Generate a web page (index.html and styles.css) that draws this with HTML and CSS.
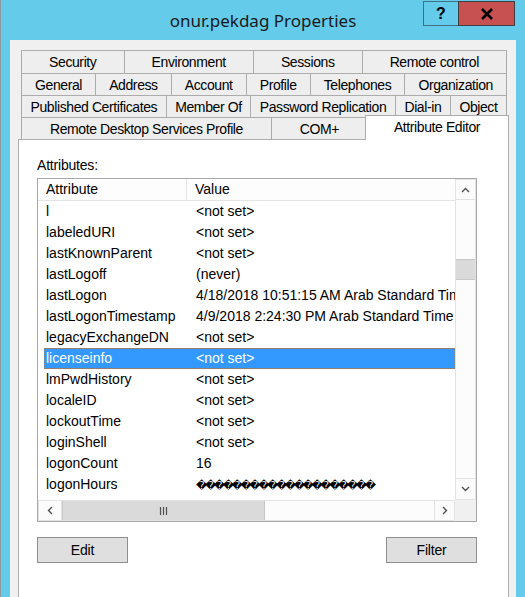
FILE: index.html
```html
<!DOCTYPE html>
<html>
<head>
<meta charset="utf-8">
<title>onur.pekdag Properties</title>
<link rel="stylesheet" href="styles.css">
</head>
<body>
<div class="window">
  <div class="titlebar">
    <div class="spacer"></div>
    <div class="title">onur.pekdag Properties</div>
    <div class="caption-buttons">
      <div class="cap-btn help">?</div>
      <div class="cap-btn close">
        <svg width="14" height="12" viewBox="0 0 14 12"><path d="M2 1 L12 11 M12 1 L2 11" stroke="#000" stroke-width="2.6" fill="none"/></svg>
      </div>
    </div>
  </div>
  <div class="client">
    <div class="tabs">
      <div class="tab-row first-row">
        <div class="tab">Security</div>
        <div class="tab">Environment</div>
        <div class="tab">Sessions</div>
        <div class="tab">Remote control</div>
      </div>
      <div class="tab-row">
        <div class="tab">General</div>
        <div class="tab">Address</div>
        <div class="tab">Account</div>
        <div class="tab">Profile</div>
        <div class="tab">Telephones</div>
        <div class="tab">Organization</div>
      </div>
      <div class="tab-row">
        <div class="tab">Published Certificates</div>
        <div class="tab">Member Of</div>
        <div class="tab">Password Replication</div>
        <div class="tab">Dial-in</div>
        <div class="tab">Object</div>
      </div>
      <div class="tab-row">
        <div class="tab">Remote Desktop Services Profile</div>
        <div class="tab">COM+</div>
        <div class="tab selected">Attribute Editor</div>
      </div>
    </div>
    <div class="page">
      <div class="label">Attributes:</div>
      <div class="listbox">
        <div class="list-main">
          <div class="list-header">
            <div class="hcol hcol-first">Attribute</div>
            <div class="hcol">Value</div>
          </div>
          <div class="rows">
            <div class="row"><span class="attr">l</span><span class="val">&lt;not set&gt;</span></div>
            <div class="row"><span class="attr">labeledURI</span><span class="val">&lt;not set&gt;</span></div>
            <div class="row"><span class="attr">lastKnownParent</span><span class="val">&lt;not set&gt;</span></div>
            <div class="row"><span class="attr">lastLogoff</span><span class="val">(never)</span></div>
            <div class="row"><span class="attr">lastLogon</span><span class="val">4/18/2018 10:51:15 AM Arab Standard Time</span></div>
            <div class="row"><span class="attr">lastLogonTimestamp</span><span class="val">4/9/2018 2:24:30 PM Arab Standard Time</span></div>
            <div class="row"><span class="attr">legacyExchangeDN</span><span class="val">&lt;not set&gt;</span></div>
            <div class="row selected"><span class="attr">licenseinfo</span><span class="val">&lt;not set&gt;</span></div>
            <div class="row"><span class="attr">lmPwdHistory</span><span class="val">&lt;not set&gt;</span></div>
            <div class="row"><span class="attr">localeID</span><span class="val">&lt;not set&gt;</span></div>
            <div class="row"><span class="attr">lockoutTime</span><span class="val">&lt;not set&gt;</span></div>
            <div class="row"><span class="attr">loginShell</span><span class="val">&lt;not set&gt;</span></div>
            <div class="row"><span class="attr">logonCount</span><span class="val">16</span></div>
            <div class="row"><span class="attr">logonHours</span><span class="val"><span class="bin">&#xFFFD;&#xFFFD;&#xFFFD;&#xFFFD;&#xFFFD;&#xFFFD;&#xFFFD;&#xFFFD;&#xFFFD;&#xFFFD;&#xFFFD;&#xFFFD;&#xFFFD;&#xFFFD;&#xFFFD;&#xFFFD;&#xFFFD;&#xFFFD;&#xFFFD;&#xFFFD;</span></span></div>
          </div>
        </div>
        <div class="vscroll">
          <div class="sb-btn sb-up">
            <svg width="9" height="6" viewBox="0 0 9 6"><polyline points="1,5 4.5,1.5 8,5" stroke="#505050" stroke-width="1.4" fill="none"/></svg>
          </div>
          <div class="vtrack"><div class="vthumb"></div></div>
          <div class="sb-btn sb-down">
            <svg width="9" height="6" viewBox="0 0 9 6"><polyline points="1,1 4.5,4.5 8,1" stroke="#505050" stroke-width="1.4" fill="none"/></svg>
          </div>
        </div>
        <div class="hscroll">
          <div class="sb-btn sb-left">
            <svg width="6" height="9" viewBox="0 0 6 9"><polyline points="5,1 1.5,4.5 5,8" stroke="#505050" stroke-width="1.4" fill="none"/></svg>
          </div>
          <div class="htrack">
            <div class="hthumb">
              <svg width="9" height="8" viewBox="0 0 9 8"><path d="M1.5 0 V8 M4.5 0 V8 M7.5 0 V8" stroke="#505050" stroke-width="1.2"/></svg>
            </div>
          </div>
          <div class="sb-btn sb-right">
            <svg width="6" height="9" viewBox="0 0 6 9"><polyline points="1,1 4.5,4.5 1,8" stroke="#505050" stroke-width="1.4" fill="none"/></svg>
          </div>
        </div>
        <div class="corner"></div>
      </div>
      <div class="buttons">
        <button class="btn btn-edit">Edit</button>
        <button class="btn btn-filter">Filter</button>
      </div>
    </div>
  </div>
</div>
</body>
</html>
```

FILE: styles.css
```css
html, body {
  margin: 0;
  padding: 0;
}

body {
  width: 525px;
  height: 597px;
  overflow: hidden;
  background: #64cbea;
  font-family: "Liberation Sans", Arial, sans-serif;
  font-size: 14px;
  color: #000;
}

.window {
  width: 524px;
  height: 597px;
  border-left: 1px solid #8c9aa0;
  display: flex;
  flex-direction: column;
}

.titlebar {
  height: 40px;
  display: grid;
  grid-template-columns: 102px 1fr 102px;
  flex: none;
}

.title {
  text-align: center;
  font-family: "Noto Sans", "Open Sans", sans-serif;
  font-size: 17px;
  line-height: 23px;
  padding-top: 9px;
  color: #1a1a1a;
}

.caption-buttons {
  display: flex;
  justify-content: flex-end;
  align-items: flex-start;
  padding-right: 10px;
  padding-top: 1px;
}

.cap-btn {
  height: 25px;
  display: flex;
  align-items: center;
  justify-content: center;
  box-sizing: border-box;
}

.help {
  width: 35px;
  border: 1px solid #3f6f80;
  border-right: none;
  font-weight: bold;
  font-size: 16px;
  font-family: "Liberation Sans", Arial, sans-serif;
  color: #000;
}

.close {
  width: 57px;
  background: #c75050;
  border: 1px solid #3f3f3f;
}

.client {
  flex: 1;
  margin-left: 9px;
  width: 506px;
  background: #f0f0f0;
  padding: 10px 7px 0 8px;
  box-sizing: border-box;
  display: flex;
  flex-direction: column;
}

.tabs {
  margin: 0 2px 0 3px;
  flex: none;
}

.tab-row {
  display: flex;
  height: 22px;
}

.tab-row.first-row {
  height: 23px;
}

.tab {
  flex: 1 1 auto;
  padding: 0 6px;
  border-top: 1px solid #acacac;
  border-left: 1px solid #acacac;
  background: #eeeeee;
  text-align: center;
  white-space: nowrap;
  display: flex;
  align-items: center;
  justify-content: center;
  letter-spacing: -0.4px;
}

.tab:last-child {
  border-right: 1px solid #acacac;
}

.tab.selected {
  background: #ffffff;
  margin: -2px -2px -1px -2px;
  position: relative;
  z-index: 2;
  padding-bottom: 3px;
}

.page {
  flex: 1;
  background: #ffffff;
  border: 1px solid #adadad;
  border-bottom: none;
  padding: 17px 0 0 18px;
}

.label {
  height: 16px;
  line-height: 16px;
  margin-bottom: 5px;
  letter-spacing: -0.2px;
}

.listbox {
  width: 440px;
  height: 344px;
  box-sizing: border-box;
  border: 1px solid #a8a8a8;
  display: grid;
  grid-template-columns: 417px 21px;
  grid-template-rows: 321px 21px;
  background: #fff;
}

.list-main {
  overflow: hidden;
}

.list-header {
  height: 21px;
  border-bottom: 1px solid #e5e5e5;
  background: #fdfdfd;
  display: grid;
  grid-template-columns: 149px 1fr;
  line-height: 21px;
}

.hcol {
  padding-left: 8px;
  white-space: nowrap;
}

.hcol-first {
  border-right: 1px solid #e5e5e5;
}

.rows {
  height: 299px;
  overflow: hidden;
}

.row {
  height: 21px;
  line-height: 21px;
  margin-left: 6px;
  display: grid;
  grid-template-columns: 143px 1fr;
  white-space: nowrap;
  overflow: hidden;
  box-sizing: border-box;
}

.attr {
  padding-left: 2px;
}

.val {
  padding-left: 9px;
  overflow: hidden;
}

.row.selected {
  background: #3399ff;
  color: #fff;
  outline: 1px dotted rgba(190, 110, 40, 0.7);
  outline-offset: -1px;
}

.bin {
  font-family: "DejaVu Sans", sans-serif;
  font-size: 11px;
  letter-spacing: -2.4px;
}

.vscroll {
  display: flex;
  flex-direction: column;
  background: #fcfcfc;
}

.sb-btn {
  display: flex;
  align-items: center;
  justify-content: center;
  box-sizing: border-box;
  border: 1px solid #e3e3e3;
  background: #fbfbfb;
}

.sb-up {
  height: 21px;
}

.sb-down {
  height: 22px;
}

.vtrack {
  flex: 1;
  border-left: 1px solid #e3e3e3;
  border-right: 1px solid #e3e3e3;
}

.vthumb {
  margin-top: 59px;
  height: 21px;
  background: #dadada;
  border-top: 1px solid #c8c8c8;
  border-bottom: 1px solid #c8c8c8;
  box-sizing: border-box;
}

.hscroll {
  display: flex;
  background: #fcfcfc;
}

.sb-left {
  width: 24px;
}

.sb-right {
  width: 21px;
}

.htrack {
  flex: 1;
  border-top: 1px solid #e3e3e3;
  border-bottom: 1px solid #e3e3e3;
  display: flex;
}

.hthumb {
  width: 203px;
  background: #dadada;
  border-left: 1px solid #c8c8c8;
  border-right: 1px solid #c8c8c8;
  box-sizing: border-box;
  display: flex;
  align-items: center;
  justify-content: center;
}

.corner {
  background: #f0f0f0;
}

.buttons {
  width: 440px;
  margin-top: 15px;
  display: flex;
  justify-content: space-between;
}

.btn {
  height: 26px;
  background: #dfdfdf;
  border: 1px solid #8e8e8e;
  font-family: "Liberation Sans", Arial, sans-serif;
  font-size: 14px;
  color: #000;
  padding: 0;
  letter-spacing: -0.2px;
}

.btn-edit {
  width: 91px;
}

.btn-filter {
  width: 91px;
}
```
